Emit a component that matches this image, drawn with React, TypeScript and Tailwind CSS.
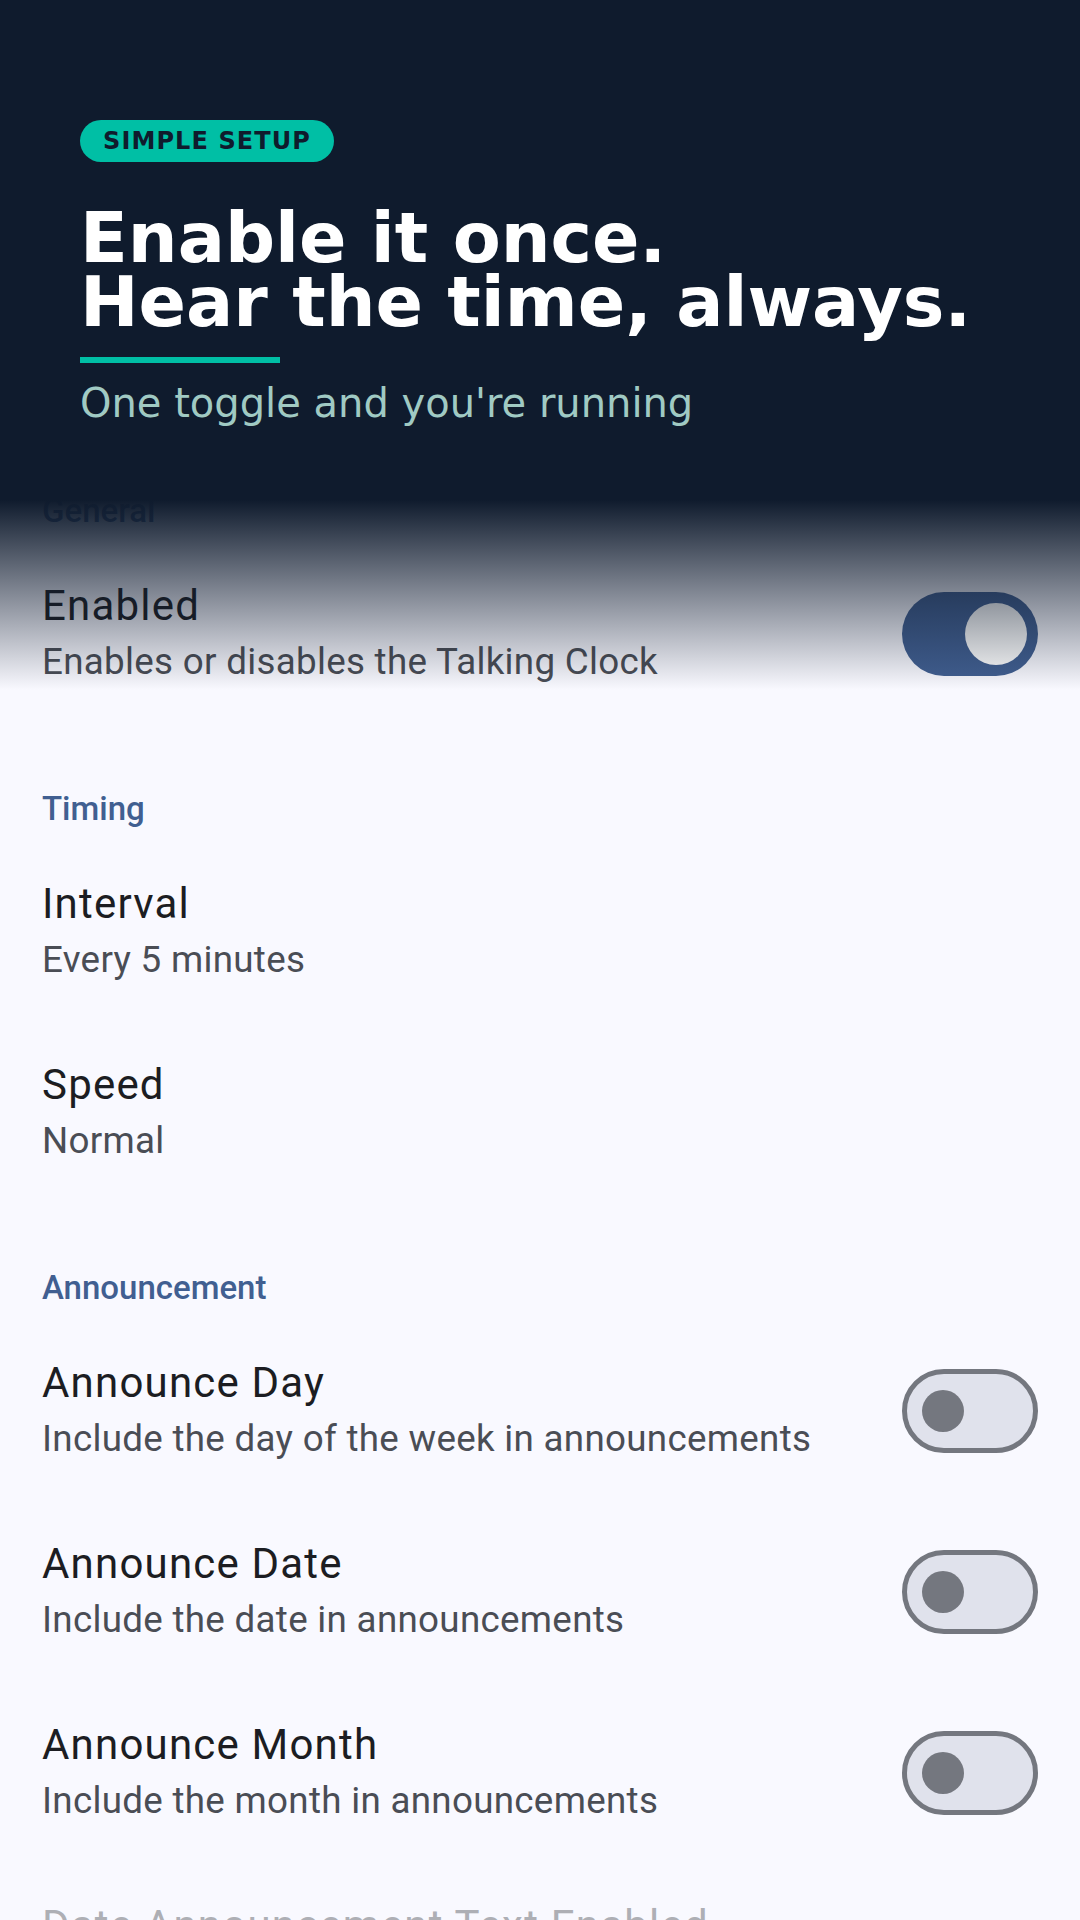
import React from "react";

function Header({ children }: { children: React.ReactNode }) {
  return (
    <div className="h-[117px] pt-[66px] pl-[42px]">
      <div className="text-[33px] leading-[37px] font-medium text-[#415f91]">{children}</div>
    </div>
  );
}

function Toggle({ on }: { on: boolean }) {
  if (on) {
    return (
      <div className="w-[136px] h-[84px] rounded-full bg-[#415f91] flex items-center justify-end p-[11px] shrink-0">
        <div className="w-[62px] h-[62px] rounded-full bg-white" />
      </div>
    );
  }
  return (
    <div className="w-[136px] h-[84px] rounded-full bg-[#e0e2ec] border-[5.5px] border-[#74777f] flex items-center pl-[14.5px] shrink-0">
      <div className="w-[42px] h-[42px] rounded-full bg-[#74777f]" />
    </div>
  );
}

function Row({ title, summary, toggle }: { title: string; summary: string; toggle?: "on" | "off" }) {
  return (
    <div className="h-[181px] flex items-center pl-[42px] pr-[42px]">
      <div className="flex-1 min-w-0">
        <div className="text-[42px] leading-[56px] text-[#1c1d22] tracking-[1.2px]">{title}</div>
        <div className="text-[36.75px] leading-[56px] text-[#4a4d55] tracking-[0.3px]">{summary}</div>
      </div>
      {toggle && <Toggle on={toggle === "on"} />}
    </div>
  );
}

export default function App() {
  return (
    <div className="relative w-[1080px] h-[1920px] overflow-hidden bg-[#f9f9ff]">
      <div className="pt-[426px] font-['Roboto',sans-serif]">
        <Header>General</Header>
        <Row title="Enabled" summary="Enables or disables the Talking Clock" toggle="on" />
        <Header>Timing</Header>
        <Row title="Interval" summary="Every 5 minutes" />
        <Row title="Speed" summary="Normal" />
        <Header>Announcement</Header>
        <Row title="Announce Day" summary="Include the day of the week in announcements" toggle="off" />
        <Row title="Announce Date" summary="Include the date in announcements" toggle="off" />
        <Row title="Announce Month" summary="Include the month in announcements" toggle="off" />
        <div className="pt-[34.5px] pl-[42px] text-[42px] leading-[56px] text-[#aeafb5] tracking-[1.2px]">
          Date Announcement Text Enabled
        </div>
      </div>

      <div className="absolute inset-x-0 top-0 h-[690px] pointer-events-none bg-[linear-gradient(to_bottom,#0f1b2d_0px,#0f1b2d_500px,rgba(15,27,45,0)_690px)]">
        <div className="pt-[120px] pl-[80px] font-['DejaVu_Sans',sans-serif] flex flex-col items-start">
          <div className="h-[42px] px-[23px] rounded-full bg-[#00bfa5] flex items-center">
            <span className="text-[24px] font-bold tracking-[1.1px] text-[#0f1b2d] leading-none">SIMPLE SETUP</span>
          </div>
          <h1 className="mt-[43.5px] text-[70px] leading-[64px] font-bold text-white">
            Enable it once.
            <br />
            Hear the time, always.
          </h1>
          <div className="mt-[23.5px] w-[200px] h-[6px] bg-[#00bfa5]" />
          <p className="mt-[16px] text-[40px] leading-[48px] text-[#a0cac3]">One toggle and you're running</p>
        </div>
      </div>
    </div>
  );
}
